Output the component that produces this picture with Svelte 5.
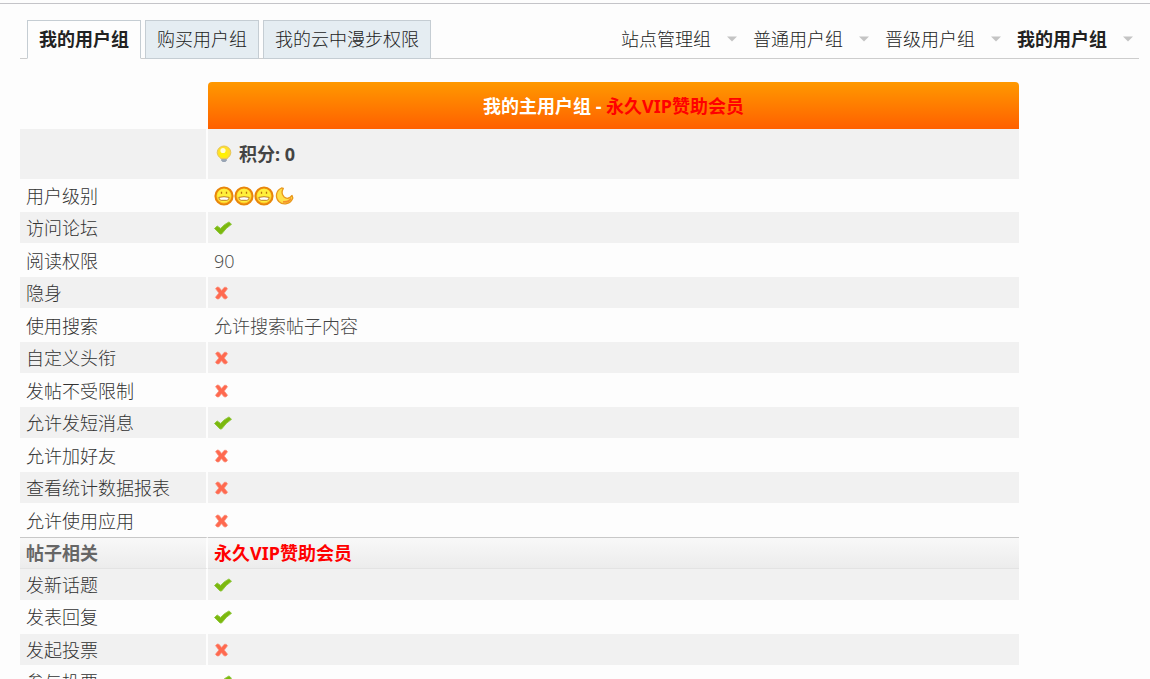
<script lang="ts">
	interface Permission {
		name: string;
		value: boolean | string;
	}

	const groupName = '永久VIP赞助会员';
	const credits = 0;

	const tabs = [
		{ label: '我的用户组', active: true },
		{ label: '购买用户组', active: false },
		{ label: '我的云中漫步权限', active: false }
	];

	const menus = [
		{ label: '站点管理组', active: false },
		{ label: '普通用户组', active: false },
		{ label: '晋级用户组', active: false },
		{ label: '我的用户组', active: true }
	];

	const basic: Permission[] = [
		{ name: '用户级别', value: 'level' },
		{ name: '访问论坛', value: true },
		{ name: '阅读权限', value: '90' },
		{ name: '隐身', value: false },
		{ name: '使用搜索', value: '允许搜索帖子内容' },
		{ name: '自定义头衔', value: false },
		{ name: '发帖不受限制', value: false },
		{ name: '允许发短消息', value: true },
		{ name: '允许加好友', value: false },
		{ name: '查看统计数据报表', value: false },
		{ name: '允许使用应用', value: false }
	];

	const posting: Permission[] = [
		{ name: '发新话题', value: true },
		{ name: '发表回复', value: true },
		{ name: '发起投票', value: false },
		{ name: '参与投票', value: true }
	];
</script>

<svelte:head>
	<title>我的用户组</title>
</svelte:head>

{#snippet mark(value: boolean | string)}
	{#if value === true}
		<svg class="icon" width="18" height="18" viewBox="0 0 18 18" role="img" aria-label="是">
			<path d="M0.5 9.5 L3.2 7 L6.6 9.4 Q10.5 5 15 2.9 L17.5 5.3 Q12 8.8 7.6 15 L6 15 Z" fill="#7cb80e" stroke="#8cc63a" stroke-width="0.9" stroke-linejoin="round" />
		</svg>
	{:else if value === false}
		<svg class="icon" width="18" height="18" viewBox="0 0 18 18" role="img" aria-label="否">
			<path d="M1.5 4.6 L3.3 3 L5 3.3 L7.6 6.4 L10.3 3.3 L12.2 3.2 L13.5 4.8 L10.3 9.1 L13.6 13.2 L12 15 L10 14.8 L7.5 11.7 L4.9 14.9 L3 15 L1.4 13.3 L4.8 9.1 Z" fill="#ff694f" stroke="#f9917c" stroke-width="0.7" stroke-linejoin="round" />
		</svg>
	{:else if value === 'level'}
		<span class="level">
			{#each [1, 2, 3] as sun (sun)}
				<svg width="20" height="20" viewBox="0 0 20 20" aria-hidden="true">
					<circle cx="10" cy="10" r="8.6" fill="#ffc52a" stroke="#e8860a" stroke-width="2" />
					<circle cx="10" cy="9.6" r="6.8" fill="#fff03c" />
					<path d="M7.5 5.8v2M12.5 5.800v2" stroke="#b8700c" stroke-width="1.3" />
					<path d="M4.800 11.400 Q10 10 15.200 11.400 Q15 14.300 12.800 14.300 H7.200 Q5 14.300 4.800 11.400 Z" fill="#fff" stroke="#b8700c" stroke-width="0.9" />
				</svg>
			{/each}
			<svg width="20" height="20" viewBox="0 0 20 20" aria-hidden="true">
				<path d="M7.500 2 C2 4.500 0.800 11 4.800 15.500 C9 19.600 16.800 18.300 18.800 12 L18 9.500 C15.500 12.800 12.300 13 10.200 11 C7.800 8.600 7.700 5.100 9.300 2.400 Z" fill="#ffe048" stroke="#e9981c" stroke-width="1.3" stroke-linejoin="round" />
				<path d="M9 15.800 Q14.500 16.600 17 12.500" fill="none" stroke="#f5932a" stroke-width="1.800" />
			</svg>
		</span>
	{:else}
		<span class="value">{value}</span>
	{/if}
{/snippet}

{#snippet rows(items: Permission[])}
	{#each items as item (item.name)}
		<tr>
			<th scope="row">{item.name}</th>
			<td>{@render mark(item.value)}</td>
		</tr>
	{/each}
{/snippet}

<div class="page">
	<nav class="bar">
		<div class="tabs">
			{#each tabs as tab (tab.label)}
				<a href="#top" class="tab" class:active={tab.active}>{tab.label}</a>
			{/each}
		</div>
		<div class="menus">
			{#each menus as menu (menu.label)}
				<button type="button" class="menu" class:active={menu.active}>
					{menu.label}
					<svg width="10" height="6" viewBox="0 0 10 6" aria-hidden="true">
						<path d="M0 0.5h10L5 5.5z" fill="#c4c4c4" />
					</svg>
				</button>
			{/each}
		</div>
	</nav>

	<table>
		<colgroup>
			<col class="name-col" />
			<col />
		</colgroup>
		<thead>
			<tr>
				<td></td>
				<th scope="col" class="title">我的主用户组 - <span class="vip">{groupName}</span></th>
			</tr>
		</thead>
		<tbody>
			<tr class="credits">
				<th></th>
				<td>
					<div class="credit">
						<svg width="20" height="20" viewBox="0 0 20 20" aria-hidden="true">
							<path d="M7.2 14h5.6v2.200L11.500 18h-3L7.200 16.200z" fill="#98a4b4" />
							<path d="M10 2a6.800 6.500 0 0 0-6.800 6.500c0 3 2 4.500 3.800 6.200h6c1.800-1.700 3.800-3.200 3.800-6.200A6.800 6.500 0 0 0 10 2z" fill="#ffe128" stroke="#e6c458" />
							<ellipse cx="9.500" cy="10" rx="4" ry="3.500" fill="#fff100" />
							<circle cx="9" cy="6.500" r="2.600" fill="#fffbd5" />
						</svg>
						积分: {credits}
					</div>
				</td>
			</tr>
		</tbody>
		<tbody class="list">
			{@render rows(basic)}
		</tbody>
		<tbody>
			<tr class="section">
				<th scope="row">帖子相关</th>
				<td class="vip">{groupName}</td>
			</tr>
		</tbody>
		<tbody class="list flipped">
			{@render rows(posting)}
		</tbody>
	</table>
</div>

<style>
	:global(body) {
		margin: 0;
		background: #fdfdfd;
	}

	.page {
		border-top: 1px solid #c4c4c8;
		margin-top: 3px;
		padding: 16px 11px 0 20px;
		background: #fdfdfd;
		color: #333;
		font-family: 'Noto Sans', 'Noto Sans CJK SC', sans-serif;
		font-size: 18px;
		font-weight: 300;
		line-height: 24px;
	}

	.bar {
		display: flex;
		justify-content: space-between;
		border-bottom: 1px solid #cdcdcd;
		margin-bottom: 23px;
	}

	.tabs {
		display: flex;
		gap: 4px;
		padding-left: 7px;
		margin-bottom: -1px;
	}

	.tab {
		box-sizing: border-box;
		height: 39px;
		padding: 6px 11px;
		border: 1px solid #c5cdd3;
		background: #e5edf2;
		color: #222;
		text-decoration: none;
		white-space: nowrap;
	}

	.tab.active {
		background: #fdfdfd;
		border-bottom-color: #fdfdfd;
		font-weight: 700;
	}

	.menus {
		display: flex;
		align-items: center;
		gap: 16px;
		padding-right: 6px;
	}

	.menu {
		display: flex;
		align-items: center;
		gap: 16px;
		padding: 0;
		border: none;
		background: none;
		color: #222;
		font: inherit;
		white-space: nowrap;
		cursor: pointer;
	}

	.menu.active {
		font-weight: 700;
	}

	table {
		width: calc(100% - 120px);
		table-layout: fixed;
		border-collapse: separate;
		border-spacing: 0;
	}

	.name-col {
		width: 188px;
	}

	th,
	td {
		box-sizing: border-box;
		height: 32px;
		padding: 0 6px;
		text-align: left;
		font-weight: inherit;
		vertical-align: middle;
		background-clip: padding-box;
	}

	tbody th {
		border-right: 2px solid #fdfdfd;
	}

	.title {
		height: 47px;
		border-radius: 4px 4px 0 0;
		background: linear-gradient(#ff9900, #ff6000);
		color: #fff;
		text-align: center;
		font-weight: 700;
	}

	.vip {
		color: #ff0000;
	}

	.value {
		color: #444;
		font-family: 'Open Sans', 'Noto Sans CJK SC', sans-serif;
	}

	.credits {
		color: #444;
		font-weight: 700;
	}

	.credits th,
	.credits td {
		height: 50px;
		background-color: #f1f1f1;
	}

	.credit {
		display: flex;
		align-items: center;
		gap: 5px;
	}

	.list tr:nth-child(odd) > * {
		height: 33px;
	}

	.list tr:nth-child(even) > *,
	.flipped tr:nth-child(odd) > * {
		height: 32px;
		background-color: #f1f1f1;
		border-bottom: 1px solid #fdfdfd;
	}

	.flipped tr:nth-child(even) > * {
		height: 33px;
		background-color: transparent;
	}

	.section > * {
		border-top: 1px solid #c8c8c8;
		border-bottom: 1px solid #e3e3e3;
		background-image: linear-gradient(#f8f8f8, #ececec);
		font-weight: 700;
	}

	.section th {
		color: #666;
	}

	.icon {
		display: block;
	}

	.level {
		display: flex;
	}
</style>
